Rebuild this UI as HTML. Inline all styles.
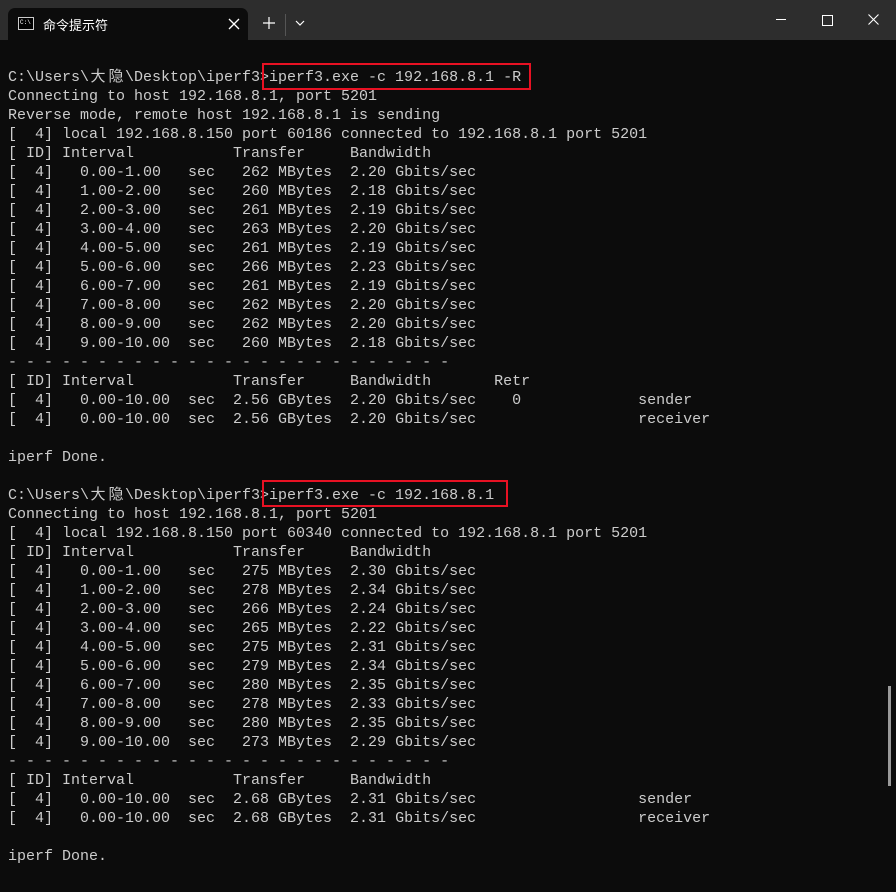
<!DOCTYPE html>
<html><head><meta charset="utf-8"><style>
html,body{margin:0;padding:0;width:896px;height:892px;overflow:hidden;background:#0c0c0c;}
.title{position:absolute;left:0;top:0;width:896px;height:40px;background:#2d2d2d;}
.tab{position:absolute;left:8px;top:8px;width:240px;height:32px;background:#0c0c0c;border-radius:7px 7px 0 0;}
.tab .t{position:absolute;left:35px;top:7px;color:#fff;font:13px "Liberation Sans","Noto Sans CJK SC",sans-serif;}
.icon{position:absolute;left:10px;top:9px;width:14px;height:11px;border:1px solid #ccc;background:#000;}
.icon span{position:absolute;left:1px;top:1px;color:#fff;font:6px "Liberation Mono",monospace;}
pre{position:absolute;left:8px;top:68px;margin:0;color:#cccccc;font:15px/19px "Liberation Mono","Noto Sans CJK SC",monospace;white-space:pre;}
.c{display:inline-block;width:18px;text-align:center;}
.box{position:absolute;border:2px solid #e81123;box-sizing:border-box;}
.sb{position:absolute;left:888px;top:686px;width:3px;height:100px;background:#9a9a9a;}
</style></head><body>
<div class="title">
 <div class="tab"><div class="icon"><span>C:\</span></div><div class="t">命令提示符</div>
  <svg style="position:absolute;left:220px;top:10px" width="12" height="12"><path d="M1 1L11 11M11 1L1 11" stroke="#fff" stroke-width="1.3"/></svg></div>
 <svg style="position:absolute;left:263px;top:17px" width="12" height="12"><path d="M6 0V12M0 6H12" stroke="#fff" stroke-width="1.2"/></svg>
 <div style="position:absolute;left:285px;top:14px;width:1px;height:22px;background:#555"></div>
 <svg style="position:absolute;left:295px;top:20px" width="10" height="6"><path d="M1 1L5 5L9 1" stroke="#fff" stroke-width="1.2" fill="none"/></svg>
 <div style="position:absolute;left:776px;top:19px;width:10px;height:1px;background:#fff"></div>
 <div style="position:absolute;left:822px;top:15px;width:9px;height:9px;border:1px solid #fff"></div>
 <svg style="position:absolute;left:868px;top:14px" width="11" height="11"><path d="M0.5 0.5L10.5 10.5M10.5 0.5L0.5 10.5" stroke="#fff" stroke-width="1.1"/></svg>
</div>
<pre>C:\Users\<span class="c">大</span><span class="c">隐</span>\Desktop\iperf3&gt;iperf3.exe -c 192.168.8.1 -R
Connecting to host 192.168.8.1, port 5201
Reverse mode, remote host 192.168.8.1 is sending
[  4] local 192.168.8.150 port 60186 connected to 192.168.8.1 port 5201
[ ID] Interval           Transfer     Bandwidth
[  4]   0.00-1.00   sec   262 MBytes  2.20 Gbits/sec
[  4]   1.00-2.00   sec   260 MBytes  2.18 Gbits/sec
[  4]   2.00-3.00   sec   261 MBytes  2.19 Gbits/sec
[  4]   3.00-4.00   sec   263 MBytes  2.20 Gbits/sec
[  4]   4.00-5.00   sec   261 MBytes  2.19 Gbits/sec
[  4]   5.00-6.00   sec   266 MBytes  2.23 Gbits/sec
[  4]   6.00-7.00   sec   261 MBytes  2.19 Gbits/sec
[  4]   7.00-8.00   sec   262 MBytes  2.20 Gbits/sec
[  4]   8.00-9.00   sec   262 MBytes  2.20 Gbits/sec
[  4]   9.00-10.00  sec   260 MBytes  2.18 Gbits/sec
- - - - - - - - - - - - - - - - - - - - - - - - -
[ ID] Interval           Transfer     Bandwidth       Retr
[  4]   0.00-10.00  sec  2.56 GBytes  2.20 Gbits/sec    0             sender
[  4]   0.00-10.00  sec  2.56 GBytes  2.20 Gbits/sec                  receiver

iperf Done.

C:\Users\<span class="c">大</span><span class="c">隐</span>\Desktop\iperf3&gt;iperf3.exe -c 192.168.8.1
Connecting to host 192.168.8.1, port 5201
[  4] local 192.168.8.150 port 60340 connected to 192.168.8.1 port 5201
[ ID] Interval           Transfer     Bandwidth
[  4]   0.00-1.00   sec   275 MBytes  2.30 Gbits/sec
[  4]   1.00-2.00   sec   278 MBytes  2.34 Gbits/sec
[  4]   2.00-3.00   sec   266 MBytes  2.24 Gbits/sec
[  4]   3.00-4.00   sec   265 MBytes  2.22 Gbits/sec
[  4]   4.00-5.00   sec   275 MBytes  2.31 Gbits/sec
[  4]   5.00-6.00   sec   279 MBytes  2.34 Gbits/sec
[  4]   6.00-7.00   sec   280 MBytes  2.35 Gbits/sec
[  4]   7.00-8.00   sec   278 MBytes  2.33 Gbits/sec
[  4]   8.00-9.00   sec   280 MBytes  2.35 Gbits/sec
[  4]   9.00-10.00  sec   273 MBytes  2.29 Gbits/sec
- - - - - - - - - - - - - - - - - - - - - - - - -
[ ID] Interval           Transfer     Bandwidth
[  4]   0.00-10.00  sec  2.68 GBytes  2.31 Gbits/sec                  sender
[  4]   0.00-10.00  sec  2.68 GBytes  2.31 Gbits/sec                  receiver

iperf Done.
</pre>
<div class="box" style="left:262px;top:63px;width:269px;height:27px"></div>
<div class="box" style="left:262px;top:480px;width:246px;height:27px"></div>
<div class="sb"></div>
</body></html>
